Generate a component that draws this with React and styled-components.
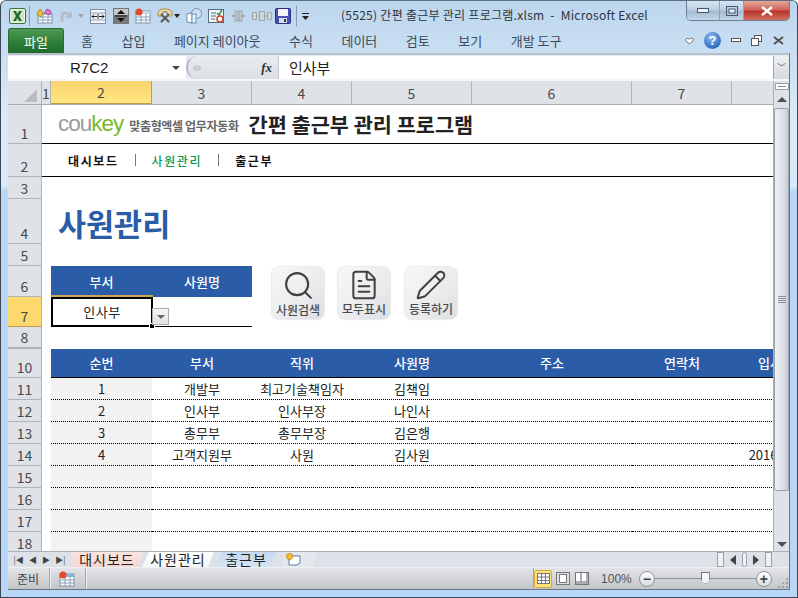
import React from 'react';
import styled, { createGlobalStyle } from 'styled-components';
import { Search, FileText, Pencil } from 'lucide-react';

const GlobalStyle = createGlobalStyle`
  html, body {
    margin: 0;
    padding: 0;
    background: #fff;
  }
  * {
    box-sizing: border-box;
  }
`;

const KR = `"Noto Sans CJK KR", "Noto Sans", sans-serif`;
const BLUE = '#2b5ca8';
const COLS = '34px 9px 101px 100px 100px 120px 160px 100px 100px';

const Win = styled.div`
  width: 798px;
  height: 598px;
  display: flex;
  flex-direction: column;
  overflow: hidden;
  font-family: ${KR};
  color: #222;
  border: 1px solid #3a4654;
  border-top-color: #5f6f80;
  border-radius: 6px 6px 0 0;
  background: linear-gradient(180deg, #bcd6ee 0%, #dbeaf8 20%, #d7e9fb 31%, #b8d6f8 32%, #b8d6f8 100%);
`;

const TitleBar = styled.div`
  height: 27px;
  flex: none;
  display: flex;
  align-items: flex-start;
  padding-left: 8px;
`;

const Qat = styled.div`
  display: flex;
  align-items: center;
  height: 16px;
  margin-top: 7px;
`;

const QatSlot = styled.span`
  display: flex;
  align-items: center;
  justify-content: center;
  flex: none;
  width: ${p => p.$w}px;
  margin-left: ${p => p.$ml || 0}px;
`;

const DocTitle = styled.div`
  margin: 5px 0 0 32px;
  font-size: 12px;
  line-height: 18px;
  letter-spacing: 0.27px;
  white-space: pre;
  color: #2c3440;
`;

const WinButtons = styled.div`
  margin-left: auto;
  margin-right: 7px;
  display: flex;
  height: 20px;
  border: 1px solid #6e7f92;
  border-top: 0;
  border-radius: 0 0 5px 5px;
  overflow: hidden;
`;

const WinButton = styled.div`
  width: ${p => p.$w}px;
  display: flex;
  align-items: center;
  justify-content: center;
  border-left: ${p => (p.$first ? 0 : '1px solid #8fa3b8')};
  background: ${p =>
    p.$close
      ? 'linear-gradient(180deg, #e4a99b 0%, #d0665a 45%, #b8352a 55%, #d5705f 100%)'
      : 'linear-gradient(180deg, #d6e5f3 0%, #bcd0e4 45%, #a4bbd2 55%, #c5d8ea 100%)'};
`;

const TabStrip = styled.div`
  height: 25px;
  flex: none;
  display: flex;
  align-items: flex-end;
  padding-left: 7px;
  padding-right: 12px;
  font-size: 13px;
  color: #3c4a5c;
`;

const FileTab = styled.div`
  width: 56px;
  height: 25px;
  display: flex;
  align-items: center;
  justify-content: center;
  color: #fff;
  border: 1px solid #2d6a35;
  border-bottom: 0;
  border-radius: 3px 3px 0 0;
  background: linear-gradient(180deg, #4f9a55 0%, #2f7f39 55%, #1f6a2a 100%);
  margin-right: 17px;
`;

const RibbonTab = styled.div`
  height: 25px;
  display: flex;
  align-items: center;
  margin-right: 28.5px;
  white-space: nowrap;
`;

const RibbonIcons = styled.div`
  margin-left: auto;
  height: 25px;
  display: flex;
  align-items: center;
  gap: 10px;
`;

const HelpDot = styled.span`
  width: 17px;
  height: 17px;
  border-radius: 50%;
  display: flex;
  align-items: center;
  justify-content: center;
  color: #fff;
  font: bold 13px "Liberation Sans", sans-serif;
  background: radial-gradient(circle at 40% 30%, #8fb9ee, #2f6ec4 70%);
`;

const Client = styled.div`
  flex: 1;
  min-height: 0;
  margin: 0 7px 7px;
  display: flex;
  flex-direction: column;
  background: #dfe5ec;
  border-top: 1px solid #b8c0c9;
  border-bottom: 1px solid #6b7683;
  border-right: 1px solid #6b7683;
`;

const FormulaRow = styled.div`
  height: 27px;
  flex: none;
  display: flex;
  padding-top: 1px;
  border-bottom: 2px solid #f4f6f8;
  background: #e6ebf1;
  border-top: 1px solid #b8c0c9;
`;

const NameBox = styled.div`
  width: 178px;
  display: flex;
  align-items: center;
  position: relative;
  background: #fff;
  font: 15px "Liberation Sans", sans-serif;
  padding-left: 62px;
  color: #222;
`;

const Caret = styled.span`
  position: absolute;
  right: 6px;
  top: 10px;
  width: 0;
  height: 0;
  border-left: 4px solid transparent;
  border-right: 4px solid transparent;
  border-top: 4px solid #444;
`;

const FxArea = styled.div`
  width: 92px;
  display: flex;
  align-items: center;
  justify-content: space-between;
  padding: 0 6px 0 5px;
  background: linear-gradient(180deg, #e9ecef, #dcdfe4);
  border-radius: 12px 0 0 12px;
  border-left: 2px solid #b4bac2;
  font: italic bold 13px "Liberation Serif", serif;
  color: #333;
`;

const FxKnob = styled.span`
  width: 8px;
  height: 6px;
  border-radius: 50%;
  background: #c9ced4;
`;

const FormulaInput = styled.div`
  flex: 1;
  display: flex;
  align-items: center;
  padding-left: 10px;
  background: #fff;
  font-size: 15px;
  color: #222;
  border-left: 1px solid #c4cad1;
`;

const ExpandButton = styled.div`
  width: 16px;
  display: flex;
  align-items: center;
  justify-content: center;
  border-left: 1px solid #9aa3ad;
  background: linear-gradient(180deg, #eef1f4, #d5dae0);
  color: #555;
  font-size: 9px;
`;

const SheetArea = styled.div`
  flex: 1;
  min-height: 0;
  display: flex;
`;

const GridWrap = styled.div`
  flex: 1;
  min-width: 0;
  overflow: hidden;
  position: relative;
  background: #fff;
`;

const Row = styled.div`
  display: grid;
  grid-template-columns: ${COLS};
  height: ${p => p.$h}px;
`;

const HeaderRow = styled(Row)`
  border-bottom: 1px solid #a9adb2;
`;

const Corner = styled.div`
  background: #dfe3e8;
  border-right: 1px solid #b1b5ba;
  display: flex;
  align-items: flex-end;
  justify-content: flex-end;
  padding: 0 4px 2px 0;
`;

const ColHead = styled.div`
  display: flex;
  align-items: center;
  justify-content: center;
  font-size: 14px;
  color: #4a4a4a;
  border-right: 1px solid ${p => (p.$active ? '#c29b4c' : '#b1b5ba')};
  background: ${p => (p.$active ? 'linear-gradient(180deg, #fad36f, #ffe680)' : '#dfe3e8')};
  border-bottom: ${p => (p.$active ? '1px solid #c29b4c' : 0)};
`;

const RowHead = styled.div`
  display: flex;
  align-items: flex-end;
  justify-content: center;
  font-size: 14px;
  line-height: 20px;
  color: #4a4a4a;
  border-right: 1px solid #b1b5ba;
  border-bottom: ${p => (p.$thick ? 2 : 1)}px solid ${p => (p.$active ? '#c29b4c' : '#b1b5ba')};
  background: ${p => (p.$active ? '#fdd86e' : '#dfe3e8')};
`;

const Banner = styled.div`
  grid-column: 2 / -1;
  display: flex;
  align-items: ${p => p.$align || 'center'};
  padding-left: ${p => p.$pad || 16}px;
  border-bottom: ${p => (p.$line ? '1px solid #000' : 0)};
  width: 732px;
`;

const Logo = styled.span`
  font: 22.5px/30px "Liberation Sans", sans-serif;
  letter-spacing: -1px;
  color: #9a9a9a;
  b {
    font-weight: 400;
    color: #7ab829;
  }
`;

const LogoTag = styled.span`
  font-size: 12px;
  font-weight: 700;
  letter-spacing: -0.35px;
  color: #666;
  margin-left: 6px;
  margin-right: 10px;
  padding-top: 3px;
`;

const AppTitle = styled.span`
  font-size: 20.8px;
  font-weight: 700;
  color: #222;
`;

const NavItem = styled.span`
  font-size: 12px;
  font-weight: ${p => (p.$on ? 500 : 700)};
  color: ${p => (p.$on ? '#0a9b4a' : '#111')};
  letter-spacing: 1.6px;
`;

const NavSep = styled.span`
  width: 1px;
  height: 12px;
  background: #777;
  margin: 0 16px;
`;

const PageTitle = styled.h1`
  margin: 0 0 3px;
  font-size: 30.5px;
  line-height: 36px;
  font-weight: 700;
  color: ${BLUE};
`;

const Cell = styled.div`
  display: flex;
  align-items: center;
  justify-content: center;
  font-size: 13px;
  white-space: nowrap;
  color: #222;
  min-width: 0;
  background: ${p => (p.$shade ? '#f2f2f2' : 'transparent')};
  border-bottom: ${p => (p.$dotted ? '1px dotted #000' : 0)};
`;

const HeadCell = styled(Cell)`
  background: ${BLUE};
  color: #fff;
  font-weight: 500;
  font-size: 13px;
  padding-bottom: 1px;
  border-bottom: ${p => (p.$line ? '1px solid #000' : 0)};
`;

const InputCell = styled(Cell)`
  border-bottom: 1px solid #000;
`;

const SelectedCell = styled(Cell)`
  border: 2px solid #000;
  margin-right: -1px;
  padding-bottom: 2px;
  font-size: 13px;
  letter-spacing: 0.5px;
  position: relative;
  box-shadow: 0 -2px 0 #d1a44f;
`;

const FillHandle = styled.span`
  position: absolute;
  right: -4px;
  bottom: -4px;
  width: 6px;
  height: 6px;
  background: #000;
  border: 1px solid #fff;
`;

const DropArrow = styled.div`
  position: absolute;
  left: 144px;
  top: 227px;
  width: 17px;
  height: 17px;
  border: 1px solid #a9adb2;
  background: linear-gradient(180deg, #f5f6f7, #dfe2e6);
  display: flex;
  align-items: center;
  justify-content: center;
  &::after {
    content: '';
    border-left: 4px solid transparent;
    border-right: 4px solid transparent;
    border-top: 4px solid #666;
  }
`;

const ActionButton = styled.div`
  position: absolute;
  left: ${p => p.$x}px;
  top: 186px;
  width: 52px;
  height: 52px;
  display: flex;
  flex-direction: column;
  align-items: center;
  justify-content: space-between;
  padding: 2px 0 2px;
  border-radius: 7px;
  background: linear-gradient(135deg, #f7f8f9 0%, #e9ebed 60%, #dcdfe2 100%);
  box-shadow: 0 0 2px #b4b8bc;
  font-size: 12px;
  line-height: 16px;
  font-weight: 500;
  white-space: nowrap;
  color: #4a4a4a;
  svg {
    flex: none;
  }
`;

const VScroll = styled.div`
  width: 16px;
  flex: none;
  display: flex;
  flex-direction: column;
  align-items: center;
  background: #dfe3e9;
  border-left: 1px solid #a9afb6;
`;

const SplitBox = styled.div`
  width: 14px;
  height: 7px;
  margin-top: 2px;
  background: #fff;
  border: 1px solid #99a0a8;
  display: flex;
  align-items: center;
  justify-content: center;
  &::after {
    content: '';
    width: 8px;
    height: 1px;
    background: #888;
  }
`;

const ScrollArrow = styled.div`
  margin: ${p => p.$m};
  width: 0;
  height: 0;
  border-left: 5px solid transparent;
  border-right: 5px solid transparent;
  ${p => (p.$up ? 'border-bottom: 5px solid #4a4f55;' : 'border-top: 5px solid #4a4f55;')}
`;

const Thumb = styled.div`
  width: 15px;
  height: 383px;
  margin-top: 6px;
  border: 1px solid #9aa1a9;
  border-radius: 2px;
  background: linear-gradient(90deg, #eef1f4, #dde1e7 55%, #c9ced5);
  display: flex;
  flex-direction: column;
  align-items: center;
  justify-content: center;
  gap: 1px;
  i {
    display: block;
    width: 8px;
    height: 1px;
    background: #8c939b;
  }
`;

const TabsBar = styled.div`
  height: 16px;
  flex: none;
  display: flex;
  align-items: stretch;
  background: #dde2e9;
  border-top: 1px solid #a9afb6;
  position: relative;
`;

const TabNav = styled.div`
  width: 63px;
  flex: none;
  display: flex;
  align-items: center;
  justify-content: space-around;
  padding: 0 3px;
  font-size: 8px;
  color: #444;
`;

const SheetTab = styled.div`
  width: ${p => p.$w}px;
  margin-left: ${p => p.$ml || 0}px;
  padding-right: ${p => p.$pr || 0}px;
  display: flex;
  align-items: center;
  justify-content: center;
  font-size: 14px;
  line-height: 15px;
  letter-spacing: 1px;
  color: #222;
  background: ${p => p.$bg};
  clip-path: ${p => p.$clip};
`;

const HScrollBox = styled.div`
  margin-left: auto;
  margin-right: 16px;
  display: flex;
  align-items: center;
  gap: 6px;
  padding-right: 1px;
`;

const Grip = styled.span`
  width: ${p => p.$w || 7}px;
  height: 15px;
  border: 1px solid #9aa1a9;
  border-radius: ${p => (p.$round ? 3 : 0)}px;
  background: #f0f2f5;
`;

const StatusBar = styled.div`
  height: 22px;
  flex: none;
  display: flex;
  align-items: center;
  padding-left: 9px;
  font-size: 12px;
  color: #444;
  border-top: 1px solid #eef1f4;
  background: linear-gradient(180deg, #e2e4e7, #c2c5c9);
`;

const StatusSep = styled.span`
  width: 1px;
  height: 21px;
  background: #a4a8ad;
  box-shadow: 1px 0 0 #eee;
  margin: ${p => p.$m};
`;

const ViewButton = styled.span`
  width: ${p => p.$w}px;
  height: 18px;
  margin-right: ${p => p.$mr || 0}px;
  display: flex;
  align-items: center;
  justify-content: center;
  border-radius: 2px;
  ${p => p.$on && 'background: #ffe27c; border: 1px solid #d9a640;'}
`;

const ZoomLabel = styled.span`
  font: 12px "Liberation Sans", sans-serif;
  margin: 0 7px 0 12px;
  color: #555;
`;

const ZoomRound = styled.span`
  width: 16px;
  height: 16px;
  flex: none;
  border-radius: 50%;
  border: 1px solid #8f959c;
  background: linear-gradient(180deg, #fff, #d9dcdf);
  display: flex;
  align-items: center;
  justify-content: center;
  font: bold 14px/14px "Liberation Sans", sans-serif;
  color: #444;
`;

const ZoomTrack = styled.span`
  width: 101px;
  height: 1px;
  background: #8f959c;
  position: relative;
`;

const ZoomKnob = styled.span`
  position: absolute;
  left: 46px;
  top: -6px;
  width: 9px;
  height: 12px;
  background: #f4f5f6;
  border: 1px solid #777;
  clip-path: polygon(0 0, 100% 0, 100% 65%, 50% 100%, 0 65%);
`;

const ResizeGrip = styled.span`
  margin-left: auto;
  width: 12px;
  height: 12px;
  margin-top: 8px;
  background: radial-gradient(circle, #9aa0a6 1px, transparent 1.2px) 0 0 / 4px 4px;
  clip-path: polygon(100% 0, 100% 100%, 0 100%);
`;

// drawn quick access icons, each sized like the original 16px glyphs
const ExcelIcon = () => (
  <svg width="17" height="16" viewBox="0 0 17 16">
    <rect x="0.5" y="0.5" width="16" height="15" rx="1.5" fill="#eaf3e6" stroke="#2f7a3a" />
    <rect x="2" y="2" width="13" height="12" fill="#cfe4c8" />
    <path d="M4 3h3l1.5 3L10 3h3L10 8l3 5h-3L8.5 10 7 13H4l3-5z" fill="#1e6f2d" />
  </svg>
);
const TableIcon = ({ top = '#8a9cb4', dot }) => (
  <svg width="16" height="16" viewBox="0 0 16 16">
    <rect x="1" y="3" width="14" height="12" fill="#fff" stroke="#7f8fa5" />
    <rect x="1" y="3" width="14" height="3" fill={top} />
    <path d="M1 9h14M1 12h14M6 6v9M11 6v9" stroke="#8aa0bc" />
    {dot && <circle cx="4" cy="4" r="3.5" fill={dot} />}
  </svg>
);
const QatIcons = {
  macro: () => (
    <svg width="17" height="16" viewBox="0 0 17 16">
      <rect x="2" y="6" width="14" height="9" fill="#fff" stroke="#7f8fa5" />
      <path d="M2 9h14M2 12h14M7 6v9M12 6v9" stroke="#8aa0bc" />
      <path d="M1 6l3-5 3 4-2 4z" fill="#f2c230" stroke="#a9861c" />
      <path d="M8 5l3-4 4 2-1 4z" fill="#dc78cf" stroke="#a0509a" />
    </svg>
  ),
  redo: () => (
    <svg width="14" height="14" viewBox="0 0 14 14">
      <path d="M3 13V7c0-3 4-4 6-2l1 1" fill="none" stroke="#b4bcc6" strokeWidth="3" />
      <path d="M13 2v7H6z" fill="#b4bcc6" />
    </svg>
  ),
  arrowGray: () => (
    <svg width="6" height="4" viewBox="0 0 6 4"><path d="M0 0h6L3 4z" fill="#9aa4b0" /></svg>
  ),
  arrowDark: () => (
    <svg width="6" height="4" viewBox="0 0 6 4"><path d="M0 0h6L3 4z" fill="#222" /></svg>
  ),
  width: () => (
    <svg width="16" height="15" viewBox="0 0 16 15">
      <rect x="0.5" y="0.5" width="15" height="14" fill="#f4f6f8" stroke="#7f8fa5" />
      <path d="M1 4h14M1 11h14" stroke="#8aa0bc" />
      <path d="M2 7.5h5M9 7.5h5M2 7.5l2-2M2 7.5l2 2M14 7.5l-2-2M14 7.5l-2 2M8 5v5" stroke="#222" fill="none" />
    </svg>
  ),
  height: () => (
    <svg width="16" height="16" viewBox="0 0 16 16">
      <rect width="16" height="16" fill="#77797c" />
      <rect x="1" y="1" width="14" height="6" fill="#c5c7ca" />
      <path d="M8 2l4 4H4zM8 14l4-4H4z" fill="#111" />
      <path d="M2 8h12" stroke="#111" />
    </svg>
  ),
  table: () => <TableIcon top="#c8d6e8" dot="#e8482c" />,
  tools: () => (
    <svg width="16" height="16" viewBox="0 0 16 16">
      <path d="M1 5c0-3 3-4 7-4s7 1 7 4v3H1z" fill="#ecd9a0" stroke="#a98b4a" />
      <path d="M4 14l8-8M4 6l8 8" stroke="#555" strokeWidth="2" />
      <circle cx="8" cy="6" r="2.5" fill="#d6dde6" stroke="#667" />
    </svg>
  ),
  pages: () => (
    <svg width="16" height="16" viewBox="0 0 16 16">
      <circle cx="10.5" cy="5.5" r="5" fill="#cfe0f2" stroke="#6a8fb8" />
      <path d="M1 6l5-1v10l-5-1z" fill="#fff" stroke="#6a8fb8" />
      <rect x="6" y="6" width="4" height="9" fill="#e9f1fa" stroke="#6a8fb8" />
    </svg>
  ),
  check: () => (
    <svg width="16" height="16" viewBox="0 0 16 16">
      <rect x="0.5" y="1.5" width="15" height="13" fill="#f2f5f8" stroke="#556a84" />
      <path d="M3 5h5M3 8h5M3 11h4" stroke="#556a84" />
      <path d="M9 5l2 2 3-5" stroke="#2e9a3c" strokeWidth="1.5" fill="none" />
      <circle cx="12" cy="11" r="3" fill="#fff" stroke="#d8442c" strokeWidth="1.5" />
    </svg>
  ),
  ungroup: () => (
    <svg width="13" height="12" viewBox="0 0 13 12">
      <rect x="3" y="1" width="3" height="10" fill="#c0c6cd" stroke="#a0a7af" />
      <rect x="7" y="1" width="3" height="10" fill="#c0c6cd" stroke="#a0a7af" />
      <path d="M0 6h3M10 6h3" stroke="#a0a7af" strokeWidth="2" />
    </svg>
  ),
  group: () => (
    <svg width="20" height="10" viewBox="0 0 20 10">
      <rect x="0.5" y="1.5" width="4" height="7" fill="#d0d5da" stroke="#a0a7af" />
      <rect x="7.5" y="0.5" width="5" height="9" fill="#d0d5da" stroke="#a0a7af" />
      <rect x="15.5" y="1.5" width="4" height="7" fill="#d0d5da" stroke="#a0a7af" />
      <path d="M5 5h2M13 5h2" stroke="#a0a7af" />
    </svg>
  ),
  save: () => (
    <svg width="16" height="16" viewBox="0 0 16 16">
      <rect x="0.5" y="0.5" width="15" height="15" rx="1" fill="#4a4fb0" stroke="#2b2f80" />
      <rect x="3" y="1" width="10" height="7" fill="#f3f5fa" />
      <rect x="4" y="10" width="8" height="5" fill="#d8dce6" />
      <rect x="9" y="11" width="2" height="3" fill="#33366e" />
    </svg>
  ),
  sep: () => <svg width="2" height="20" viewBox="0 0 2 20"><rect width="1" height="20" fill="#8d9aa8" /></svg>,
  more: () => (
    <svg width="7" height="7" viewBox="0 0 7 7">
      <path d="M0 0h7v1H0zM0 3h7L3.500 7z" fill="#222" />
    </svg>
  ),
};

const qatItems = [
  ['excel', 17, 0],
  ['sep', 2, 3],
  ['macro', 17, 5],
  ['redo', 14, 6],
  ['arrowGray', 6, 5],
  ['width', 16, 6],
  ['height', 16, 7],
  ['table', 16, 6],
  ['tools', 16, 6],
  ['arrowDark', 6, 1],
  ['pages', 16, 6],
  ['check', 16, 6],
  ['ungroup', 13, 8],
  ['group', 20, 7],
  ['save', 16, 3],
  ['sep', 2, 5],
  ['more', 7, 4],
];

const ribbonTabs = ['홈', '삽입', '페이지 레이아웃', '수식', '데이터', '검토', '보기', '개발 도구'];
const columns = ['1', '2', '3', '4', '5', '6', '7', ''];
const tableHead = ['순번', '부서', '직위', '사원명', '주소', '연락처', '입사일자'];

const employees = [
  { row: 11, no: '1', dept: '개발부', pos: '최고기술책임자', name: '김책임', date: '' },
  { row: 12, no: '2', dept: '인사부', pos: '인사부장', name: '나인사', date: '' },
  { row: 13, no: '3', dept: '총무부', pos: '총무부장', name: '김은행', date: '' },
  { row: 14, no: '4', dept: '고객지원부', pos: '사원', name: '김사원', date: '2016-03-02' },
  { row: 15 },
  { row: 16 },
  { row: 17 },
  { row: 18, last: true },
];

const actions = [
  { label: '사원검색', x: 264, Icon: Search, size: 33 },
  { label: '모두표시', x: 330, Icon: FileText, size: 32 },
  { label: '등록하기', x: 397, Icon: Pencil, size: 32 },
];

const TAB_STRAIGHT = 'polygon(0 0, 100% 0, calc(100% - 5px) 100%, 0 100%)';
const TAB_SLANT = 'polygon(7px 0, 100% 0, calc(100% - 6px) 100%, 0 100%)';

const App = () => {
  return (
    <>
      <GlobalStyle />
      <Win>
        <TitleBar>
          <Qat>
            {qatItems.map(([name, w, ml], i) => {
              const Icon = name === 'excel' ? ExcelIcon : QatIcons[name];
              return (
                <QatSlot key={i} $w={w} $ml={ml}>
                  <Icon />
                </QatSlot>
              );
            })}
          </Qat>
          <DocTitle>(5525) 간편 출근부 관리 프로그램.xlsm  -  Microsoft Excel</DocTitle>
          <WinButtons>
            <WinButton $w={32} $first>
              <svg width="12" height="6" viewBox="0 0 12 6"><rect x="0.5" y="0.5" width="11" height="4" fill="#eef4fa" stroke="#45586e" /></svg>
            </WinButton>
            <WinButton $w={24}>
              <svg width="12" height="10" viewBox="0 0 12 10"><rect x="0.5" y="0.5" width="11" height="9" fill="none" stroke="#45586e" /><rect x="3" y="3" width="6" height="4" fill="#eef4fa" stroke="#45586e" /></svg>
            </WinButton>
            <WinButton $w={46} $close>
              <svg width="14" height="10" viewBox="0 0 14 10"><path d="M2 1l10 8M12 1L2 9" stroke="#fff" strokeWidth="2.5" /></svg>
            </WinButton>
          </WinButtons>
        </TitleBar>

        <TabStrip>
          <FileTab>파일</FileTab>
          {ribbonTabs.map(t => (
            <RibbonTab key={t}>{t}</RibbonTab>
          ))}
          <RibbonIcons>
            <svg width="9" height="8" viewBox="0 0 11 9"><path d="M5.500 8L1 4c-1-2 2-4 4.500-1.500C8-.5 11 2 10 4z" fill="#fff" stroke="#555" /></svg>
            <HelpDot>?</HelpDot>
            <svg width="10" height="5" viewBox="0 0 10 5"><rect x="0.500" y="0.500" width="9" height="3" fill="#fff" stroke="#555" /></svg>
            <svg width="11" height="11" viewBox="0 0 11 11"><rect x="3.500" y="0.500" width="7" height="6" fill="#fff" stroke="#555" /><rect x="0.500" y="3.500" width="7" height="7" fill="#fff" stroke="#555" /></svg>
            <svg width="13" height="9" viewBox="0 0 13 9"><path d="M2 1l9 7M11 1L2 8" stroke="#555" strokeWidth="2" /></svg>
          </RibbonIcons>
        </TabStrip>

        <Client>
          <FormulaRow>
            <NameBox>
              R7C2
              <Caret />
            </NameBox>
            <FxArea>
              <FxKnob />
              fx
            </FxArea>
            <FormulaInput>인사부</FormulaInput>
            <ExpandButton>﹀</ExpandButton>
          </FormulaRow>

          <SheetArea>
            <GridWrap>
              <HeaderRow $h={24}>
                <Corner>
                  <svg width="13" height="13" viewBox="0 0 13 13"><path d="M13 0v13H0z" fill="#b9bdc3" /></svg>
                </Corner>
                {columns.map((c, i) => (
                  <ColHead key={i} $active={c === '2'}>{c}</ColHead>
                ))}
              </HeaderRow>

              <Row $h={39}>
                <RowHead>1</RowHead>
                <Banner $line>
                  <Logo>cou<b>key</b></Logo>
                  <LogoTag>맞춤형엑셀 업무자동화</LogoTag>
                  <AppTitle>간편 출근부 관리 프로그램</AppTitle>
                </Banner>
              </Row>
              <Row $h={33}>
                <RowHead>2</RowHead>
                <Banner $line $pad={26}>
                  <NavItem>대시보드</NavItem>
                  <NavSep />
                  <NavItem $on>사원관리</NavItem>
                  <NavSep />
                  <NavItem>출근부</NavItem>
                </Banner>
              </Row>
              <Row $h={22}>
                <RowHead>3</RowHead>
              </Row>
              <Row $h={45}>
                <RowHead>4</RowHead>
                <Banner $align="flex-end">
                  <PageTitle>사원관리</PageTitle>
                </Banner>
              </Row>
              <Row $h={22}>
                <RowHead>5</RowHead>
              </Row>
              <Row $h={31}>
                <RowHead>6</RowHead>
                <span />
                <HeadCell>부서</HeadCell>
                <HeadCell>사원명</HeadCell>
              </Row>
              <Row $h={30}>
                <RowHead $active>7</RowHead>
                <span />
                <SelectedCell>
                  인사부
                  <FillHandle />
                </SelectedCell>
                <InputCell />
              </Row>
              <Row $h={22}>
                <RowHead $thick>8</RowHead>
              </Row>
              <Row $h={29}>
                <RowHead>10</RowHead>
                <span />
                {tableHead.map(h => (
                  <HeadCell key={h} $line>{h}</HeadCell>
                ))}
              </Row>
              {employees.map(e => (
                <Row key={e.row} $h={22}>
                  <RowHead>{e.row}</RowHead>
                  <span />
                  <Cell $shade $dotted={!e.last}>{e.no}</Cell>
                  <Cell $dotted={!e.last}>{e.dept}</Cell>
                  <Cell $dotted={!e.last}>{e.pos}</Cell>
                  <Cell $dotted={!e.last}>{e.name}</Cell>
                  <Cell $dotted={!e.last} />
                  <Cell $dotted={!e.last} />
                  <Cell $dotted={!e.last}>{e.date}</Cell>
                </Row>
              ))}

              <DropArrow />
              {actions.map(({ label, x, Icon, size }) => (
                <ActionButton key={label} $x={x}>
                  <Icon size={size} strokeWidth={1.5} color="#404040" />
                  {label}
                </ActionButton>
              ))}
            </GridWrap>

            <VScroll>
              <SplitBox />
              <ScrollArrow $up $m="7px 0 0" />
              <Thumb>
                <i />
                <i />
                <i />
                <i />
              </Thumb>
              <ScrollArrow $m="auto 0 4px" />
            </VScroll>
          </SheetArea>

          <TabsBar>
            <TabNav>
              <span>|◀</span>
              <span>◀</span>
              <span>▶</span>
              <span>▶|</span>
            </TabNav>
            <SheetTab $w={72} $bg="linear-gradient(180deg, #fbe4e0, #f6d5d0)" $clip={TAB_STRAIGHT}>대시보드</SheetTab>
            <SheetTab $w={72} $ml={-1} $bg="linear-gradient(180deg, #fff, #f4f6f8)" $clip={TAB_SLANT}>사원관리</SheetTab>
            <SheetTab $w={62} $ml={1} $bg="linear-gradient(180deg, #c6daf2, #d7e4f3)" $clip={TAB_SLANT}>출근부</SheetTab>
            <SheetTab $w={38} $ml={3} $pr={12} $bg="#e4e8ee" $clip={TAB_SLANT}>
              <svg width="15" height="13" viewBox="0 0 15 13">
                <path d="M3 3h11v7l-3 2H3z" fill="#fff" stroke="#5c7da6" />
                <circle cx="3.500" cy="3.500" r="3" fill="#f2c230" stroke="#c8871c" />
              </svg>
            </SheetTab>
            <HScrollBox>
              <Grip />
              <svg width="6" height="10" viewBox="0 0 6 10"><path d="M6 0v10L0 5z" fill="#444" /></svg>
              <Grip $w={5} $round />
              <svg width="6" height="10" viewBox="0 0 6 10"><path d="M0 0v10l6-5z" fill="#444" /></svg>
              <Grip />
            </HScrollBox>
          </TabsBar>

          <StatusBar>
            <span>준비</span>
            <StatusSep $m="0 9px 0 10px" />
            <TableIcon top="#8fb0d8" dot="#e8482c" />
            <StatusSep $m="0 0 0 10px" />
            <StatusSep $m="0 0 0 447px" />
            <ViewButton $w={18} $on $mr={3}>
              <svg width="13" height="11" viewBox="0 0 13 11"><rect x="0.500" y="0.500" width="12" height="10" fill="#fff" stroke="#777" /><path d="M0 4h13M0 7.500h13M4.500 0v11M8.500 0v11" stroke="#777" /></svg>
            </ViewButton>
            <ViewButton $w={15} $mr={4}>
              <svg width="14" height="13" viewBox="0 0 14 13"><rect x="0.500" y="0.500" width="13" height="12" fill="#dcdfe2" stroke="#777" /><rect x="3.500" y="2.500" width="7" height="8" fill="#fff" stroke="#777" /></svg>
            </ViewButton>
            <ViewButton $w={15}>
              <svg width="14" height="13" viewBox="0 0 14 13"><rect x="0.500" y="0.500" width="13" height="12" fill="#a9adb2" stroke="#777" /><rect x="1" y="1" width="4" height="8" fill="#fff" /><rect x="7" y="1" width="4" height="8" fill="#fff" /></svg>
            </ViewButton>
            <ZoomLabel>100%</ZoomLabel>
            <ZoomRound>−</ZoomRound>
            <ZoomTrack>
              <ZoomKnob />
            </ZoomTrack>
            <ZoomRound>+</ZoomRound>
            <ResizeGrip />
          </StatusBar>
        </Client>
      </Win>
    </>
  );
};

export default App;
